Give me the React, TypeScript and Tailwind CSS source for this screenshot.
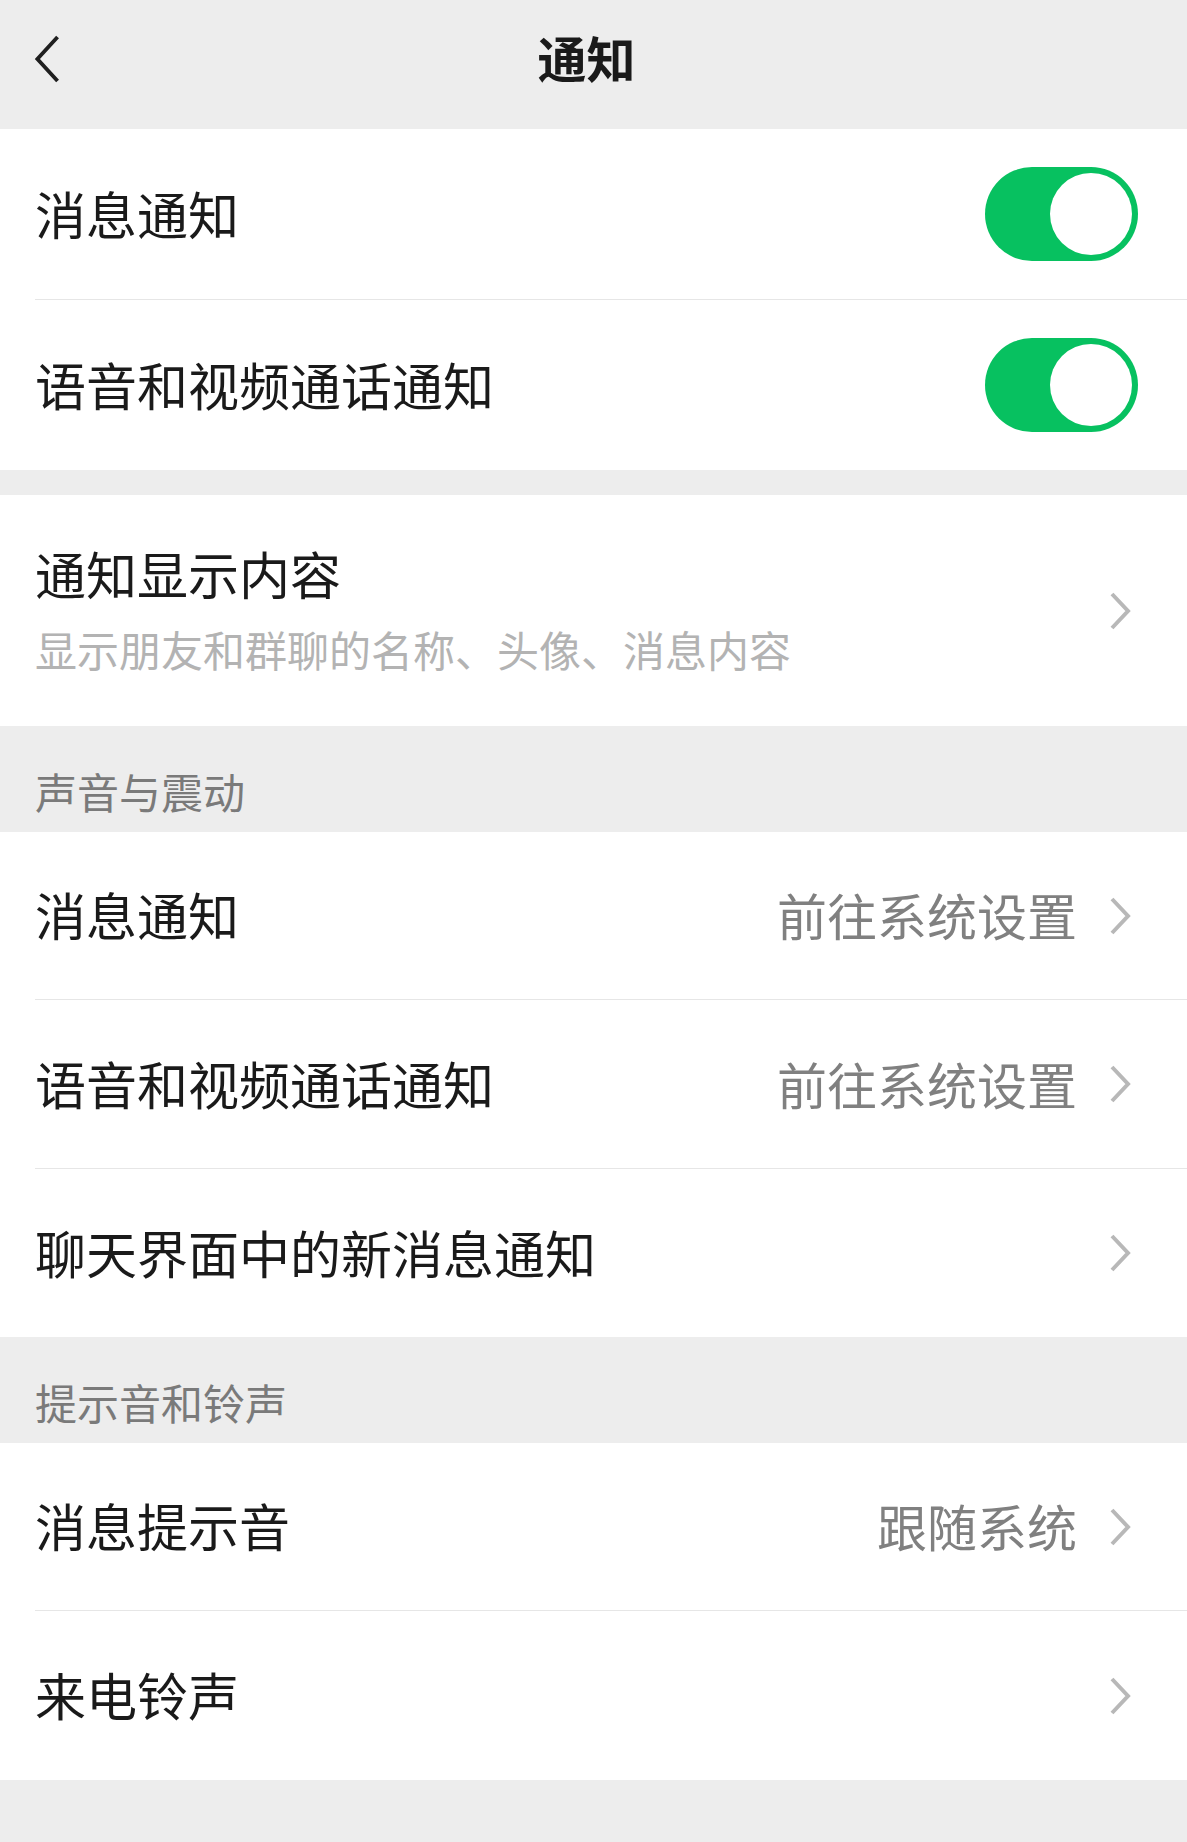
import React from 'react';

function Chevron({ className = '' }: { className?: string }) {
  return (
    <svg viewBox="0 0 22 38" className={`w-[22px] h-[38px] ${className}`} fill="none">
      <path d="M3 2 L19 19 L3 36" stroke="#b8b8b8" strokeWidth="4" strokeLinecap="butt" strokeLinejoin="miter" />
    </svg>
  );
}

function Toggle() {
  return (
    <div className="w-[153px] h-[94px] rounded-full bg-[#07c160] flex items-center justify-end pr-[6px]">
      <div className="w-[82px] h-[82px] rounded-full bg-white" />
    </div>
  );
}

function Row({
  label,
  value,
  right,
  divider,
  height = 'h-[169px]',
}: {
  label: string;
  value?: string;
  right?: React.ReactNode;
  divider?: boolean;
  height?: string;
}) {
  return (
    <div className="pl-[35px]">
      <div className={`${height} flex items-center pr-[49px] ${divider ? 'border-b border-[#e6e6e6]' : ''}`}>
        <span className="flex-1 text-[51px] leading-[60px] -mt-[3px] text-[#1a1a1a]">{label}</span>
        {right ?? (
          <div className="flex items-center pr-[7px]">
            {value && <span className="text-[50px] leading-[60px] -mt-[3px] text-[#808080] mr-[32px]">{value}</span>}
            <Chevron />
          </div>
        )}
      </div>
    </div>
  );
}

function SectionHeader({ title }: { title: string }) {
  return (
    <div className="h-[106px] pt-[40px] pl-[35px] text-[42px] leading-[50px] text-[#7a7a7a]">{title}</div>
  );
}

export default function App() {
  return (
    <div className="min-h-[1842px] bg-[#ededed] font-['Noto_Sans_CJK_SC',sans-serif]">
      {/* Title bar */}
      <div className="relative h-[129px] flex items-center justify-center">
        <svg viewBox="0 0 28 50" className="absolute left-[33px] top-[35px] w-[28px] h-[48px]" fill="none">
          <path d="M25 2 L4 25 L25 48" stroke="#1f1f1f" strokeWidth="4" />
        </svg>
        <h1 className="text-[49px] leading-[60px] font-semibold text-[#1a1a1a] -mt-[16px] -ml-[14px]">通知</h1>
      </div>

      <div className="bg-white">
        <Row label="消息通知" right={<Toggle />} divider height="h-[171px]" />
        <Row label="语音和视频通话通知" right={<Toggle />} height="h-[170px]" />
      </div>

      <div className="h-[25px]" />

      <div className="bg-white h-[231px] pl-[35px] pr-[56px] flex items-center">
        <div className="flex-1 -mt-[3px]">
          <div className="text-[51px] leading-[60px] text-[#1a1a1a]">通知显示内容</div>
          <div className="mt-[20px] text-[42px] leading-[52px] text-[#b3b3b3]">显示朋友和群聊的名称、头像、消息内容</div>
        </div>
        <Chevron />
      </div>

      <SectionHeader title="声音与震动" />
      <div className="bg-white">
        <Row label="消息通知" value="前往系统设置" divider height="h-[168px]" />
        <Row label="语音和视频通话通知" value="前往系统设置" divider height="h-[169px]" />
        <Row label="聊天界面中的新消息通知" height="h-[168px]" />
      </div>

      <SectionHeader title="提示音和铃声" />
      <div className="bg-white">
        <Row label="消息提示音" value="跟随系统" divider height="h-[168px]" />
        <Row label="来电铃声" height="h-[169px]" />
      </div>
    </div>
  );
}
